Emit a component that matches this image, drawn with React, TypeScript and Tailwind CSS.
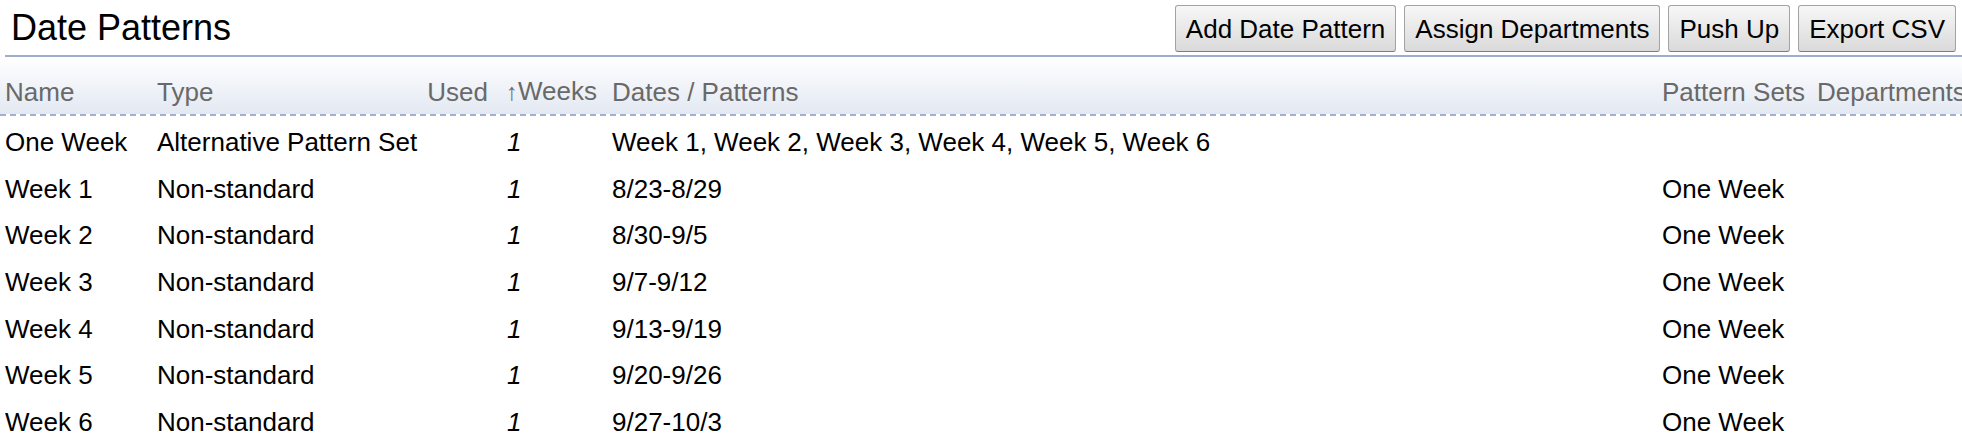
import React from "react";

type Row = {
  name: string;
  type: string;
  used: string;
  weeks: string;
  dates: string;
  sets: string;
  depts: string;
};

const rows: Row[] = [
  {
    name: "One Week",
    type: "Alternative Pattern Set",
    used: "",
    weeks: "1",
    dates: "Week 1, Week 2, Week 3, Week 4, Week 5, Week 6",
    sets: "",
    depts: "",
  },
  { name: "Week 1", type: "Non-standard", used: "", weeks: "1", dates: "8/23-8/29", sets: "One Week", depts: "" },
  { name: "Week 2", type: "Non-standard", used: "", weeks: "1", dates: "8/30-9/5", sets: "One Week", depts: "" },
  { name: "Week 3", type: "Non-standard", used: "", weeks: "1", dates: "9/7-9/12", sets: "One Week", depts: "" },
  { name: "Week 4", type: "Non-standard", used: "", weeks: "1", dates: "9/13-9/19", sets: "One Week", depts: "" },
  { name: "Week 5", type: "Non-standard", used: "", weeks: "1", dates: "9/20-9/26", sets: "One Week", depts: "" },
  { name: "Week 6", type: "Non-standard", used: "", weeks: "1", dates: "9/27-10/3", sets: "One Week", depts: "" },
];

const cols = "grid grid-cols-[152px_250px_95px_110px_1050px_155px_200px] whitespace-nowrap";

function HeaderButton({ label }: { label: string }) {
  return (
    <button
      type="button"
      className="h-[47px] px-[10px] rounded-[3px] border border-[#a3a3a3] border-b-[#7d7d7d] bg-gradient-to-b from-[#f7f7f7] to-[#dadada] text-[26px] text-black leading-none"
    >
      {label}
    </button>
  );
}

export default function App() {
  return (
    <div className="w-[1962px] h-[448px] overflow-hidden bg-white font-['Liberation_Sans',Arial,sans-serif] text-black">
      {/* title bar */}
      <div className="ml-[5px] h-[57px] flex justify-between items-start border-b-2 border-[#9caecb]">
        <h1 className="pl-[6px] pt-[8px] text-[36px] leading-[40px] font-normal">Date Patterns</h1>
        <div className="flex gap-[8px] pt-[5px] pr-[6px]">
          <HeaderButton label="Add Date Pattern" />
          <HeaderButton label="Assign Departments" />
          <HeaderButton label="Push Up" />
          <HeaderButton label="Export CSV" />
        </div>
      </div>

      {/* table header */}
      <div className={`${cols} h-[57px] items-end pb-[7px] bg-gradient-to-b from-[#ffffff] to-[#e3e8f2] text-[26px] leading-[30px] text-[#696969]`}>
        <div className="pl-[5px]">Name</div>
        <div className="pl-[5px]">Type</div>
        <div className="pr-[9px] text-right">Used</div>
        <div className="pl-[9px]">
          <span className="text-[24px]">↑</span>Weeks
        </div>
        <div className="pl-[5px]">Dates / Patterns</div>
        <div className="pl-[5px]">Pattern Sets</div>
        <div className="pl-[5px]">Departments</div>
      </div>
      <div className="h-[2px] bg-[repeating-linear-gradient(90deg,#9fb2cf_0px,#9fb2cf_6px,transparent_6px,transparent_10px)]" />

      {/* rows */}
      <div className="pt-[3px] text-[26px]">
        {rows.map((r) => (
          <div key={r.name} className={`${cols} h-[46.7px] leading-[46.7px]`}>
            <div className="pl-[5px]">{r.name}</div>
            <div className="pl-[5px]">{r.type}</div>
            <div className="pr-[9px] text-right">{r.used}</div>
            <div className="pl-[10px] italic">{r.weeks}</div>
            <div className="pl-[5px]">{r.dates}</div>
            <div className="pl-[5px]">{r.sets}</div>
            <div className="pl-[5px]">{r.depts}</div>
          </div>
        ))}
      </div>
    </div>
  );
}
